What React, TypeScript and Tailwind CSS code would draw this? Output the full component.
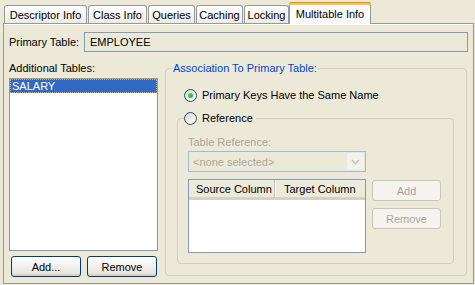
const tabs = [
  { label: "Descriptor Info", w: "w-[83px]" },
  { label: "Class Info", w: "w-[59px]" },
  { label: "Queries", w: "w-[47px]" },
  { label: "Caching", w: "w-[47px]" },
  { label: "Locking", w: "w-[45px]" },
];

const Radio = ({ checked }: { checked?: boolean }) => (
  <span className="flex h-[13px] w-[13px] shrink-0 items-center justify-center rounded-full border border-[#1c5180] bg-gradient-to-br from-[#dcd8c8] to-white">
    {checked && (
      <span className="h-[5px] w-[5px] rounded-full bg-gradient-to-br from-[#5cd859] to-[#21a121]" />
    )}
  </span>
);

const XpButton = ({
  label,
  disabled,
  className,
}: {
  label: string;
  disabled?: boolean;
  className: string;
}) => (
  <button
    disabled={disabled}
    className={
      disabled
        ? `h-[21px] rounded-[3px] border border-[#c9c7ba] bg-[#f4f3ee] text-[#aca899] ${className}`
        : `h-[21px] rounded-[3px] border border-[#003c74] bg-gradient-to-b from-white to-[#e3e2da] text-black shadow-[inset_0_-2px_0_#d8d2c6] ${className}`
    }
  >
    {label}
  </button>
);

export default function App() {
  return (
    <div className="h-[285px] w-[475px] overflow-hidden bg-[#ece9d8] pl-[3px] pt-[2px] font-['Liberation_Sans',Tahoma,sans-serif] text-[11px] leading-[14px] text-black">
      {/* tab strip */}
      <div className="flex h-[21px] items-end gap-[1px] pl-[1px]">
        {tabs.map((t) => (
          <div
            key={t.label}
            className={`flex h-[18px] items-center justify-center rounded-t-[3px] border border-b-0 border-[#919b9c] bg-gradient-to-b from-white to-[#ecebe6] ${t.w}`}
          >
            {t.label}
          </div>
        ))}
        <div className="relative z-10 -mb-px -ml-px flex h-[22px] w-[82px] flex-col rounded-t-[3px] border border-b-0 border-[#919b9c] bg-[#fcfcfe]">
          <div className="-mx-px -mt-px h-[3px] rounded-t-[3px] border-t border-[#e68b2c] bg-[#ffc83c]" />
          <div className="flex flex-1 items-center justify-center pb-[1px]">Multitable Info</div>
        </div>
      </div>

      {/* tab panel */}
      <div className="flex h-[261px] w-[471px] flex-col border border-[#919b9c] shadow-[inset_0_1px_0_#fff]">
        <div className="mt-[8px] flex items-center pl-[5px]">
          <span className="w-[75px]">Primary Table:</span>
          <div className="flex h-[20px] w-[384px] items-center border border-[#7f9db9] pl-[5px]">EMPLOYEE</div>
        </div>

        <div className="mt-[9px] flex pl-[5px]">
          {/* left column */}
          <div className="flex w-[149px] flex-col">
            <span>Additional Tables:</span>
            <div className="mt-[3px] h-[173px] border border-[#7f9db9] bg-white">
              <div className="h-[14px] border border-dotted border-[#c8b27a] bg-[#316ac5] pl-[1px] leading-[12px] text-white">
                SALARY
              </div>
            </div>
            <div className="mt-[5px] flex gap-[6px] pl-[2px]">
              <XpButton label="Add..." className="w-[70px]" />
              <XpButton label="Remove" className="w-[70px]" />
            </div>
          </div>

          {/* association group */}
          <fieldset className="ml-[7px] h-[215px] w-[302px] rounded-[4px] border border-[#d0d0bf]">
            <legend className="ml-[6px] px-[1px] text-[#0046d5]">Association To Primary Table:</legend>
            <label className="ml-[18px] mt-[13px] flex items-center gap-[5px]">
              <Radio checked />
              <span>Primary Keys Have the Same Name</span>
            </label>

            <fieldset className="ml-[11px] mt-[9px] h-[153px] w-[277px] rounded-[4px] border border-[#d0d0bf]">
              <legend className="ml-[6px] flex items-center gap-[5px] pr-[3px]">
                <Radio />
                <span>Reference</span>
              </legend>
              <div className="pl-[10px]">
                <div className="mt-[10px] text-[#aca899]">Table Reference:</div>
                <div className="mt-[2px] flex h-[21px] w-[178px] items-center border border-[#a5b9d6] pl-[4px] pr-[1px] text-[#aca899]">
                  <span className="flex-1">&lt;none selected&gt;</span>
                  <span className="flex h-[17px] w-[17px] items-center justify-center rounded-[2px] bg-[#f3f2ec]">
                    <svg width="9" height="6" viewBox="0 0 9 6">
                      <path d="M1 1l3.5 3.5L8 1" fill="none" stroke="#c9c7ba" strokeWidth="1.6" />
                    </svg>
                  </span>
                </div>

                <div className="mt-[7px] flex gap-[6px]">
                  <div className="flex h-[74px] w-[178px] flex-col border border-[#7f9db9] bg-white">
                    <div className="flex h-[20px] border-b-[3px] border-[#d6d2c2] bg-[#ebeadb]">
                      <div className="flex w-[86px] items-center border-r border-[#c7c5b2] pl-[7px] shadow-[1px_0_0_#fff]">
                        Source Column
                      </div>
                      <div className="flex flex-1 items-center pl-[9px]">Target Column</div>
                    </div>
                  </div>
                  <div className="mt-[1px] flex flex-col gap-[7px]">
                    <XpButton label="Add" disabled className="w-[69px]" />
                    <XpButton label="Remove" disabled className="w-[69px]" />
                  </div>
                </div>
              </div>
            </fieldset>
          </fieldset>
        </div>
      </div>
    </div>
  );
}
